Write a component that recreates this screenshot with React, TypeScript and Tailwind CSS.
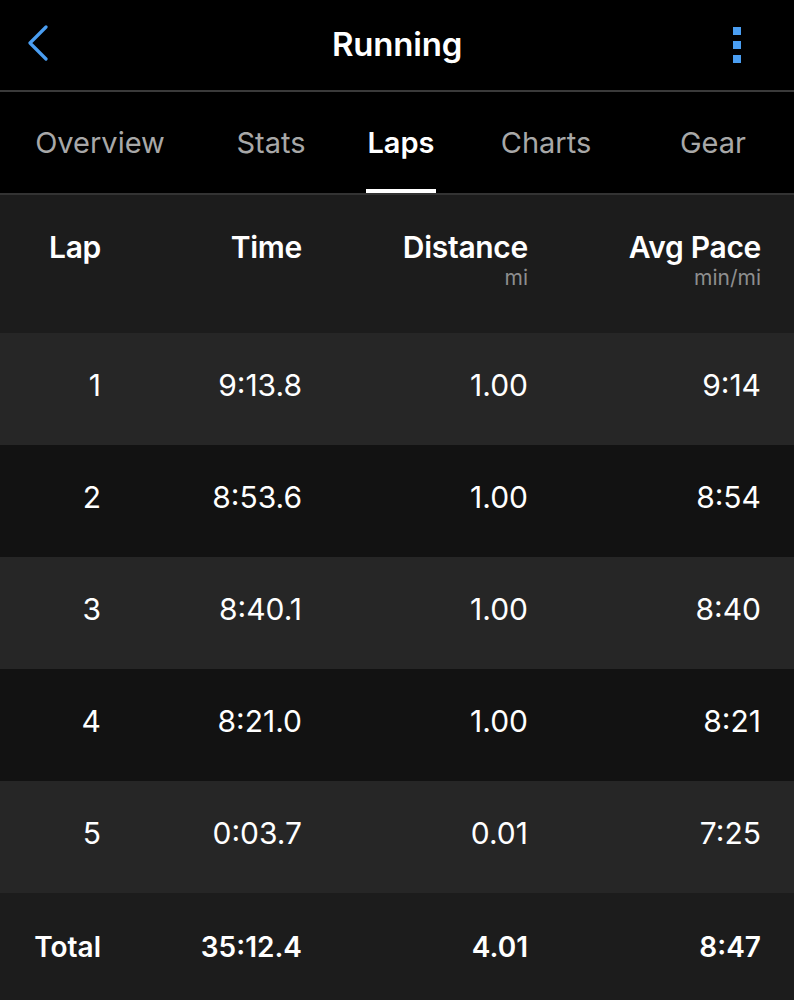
import { ReactNode } from 'react';

const tabs = ['Overview', 'Stats', 'Laps', 'Charts', 'Gear'];

const laps = [
  { lap: '1', time: '9:13.8', dist: '1.00', pace: '9:14' },
  { lap: '2', time: '8:53.6', dist: '1.00', pace: '8:54' },
  { lap: '3', time: '8:40.1', dist: '1.00', pace: '8:40' },
  { lap: '4', time: '8:21.0', dist: '1.00', pace: '8:21' },
  { lap: '5', time: '0:03.7', dist: '0.01', pace: '7:25' },
];

// fixed column right edges: 101, 302, 528, 761
function Row({ cells, className }: { cells: ReactNode[]; className: string }) {
  return (
    <div className={`grid grid-cols-[101px_201px_226px_233px] pr-[33px] text-right ${className}`}>
      {cells.map((c, i) => (
        <div key={i}>{c}</div>
      ))}
    </div>
  );
}

function HeadCell({ label, unit }: { label: string; unit?: string }) {
  return (
    <div className="flex flex-col items-end">
      <span className="text-[30px] font-semibold leading-[36px] tracking-[-0.3px] text-white">{label}</span>
      <span className="h-[26px] text-[21px] leading-[26px] text-[#8e8e8e]">{unit}</span>
    </div>
  );
}

export default function App() {
  return (
    <div className="w-[794px] h-[1000px] overflow-hidden bg-black font-['Inter',sans-serif] text-white">
      {/* Top bar */}
      <div className="relative flex h-[90px] items-center justify-center">
        <svg className="absolute left-[26px] top-[25px]" width="24" height="36" viewBox="0 0 24 36" fill="none">
          <path d="M20 2 L4 18 L20 34" stroke="#4a9ef2" strokeWidth="3.2" strokeLinecap="round" strokeLinejoin="round" />
        </svg>
        <span className="text-[33px] font-semibold tracking-[-0.2px]">Running</span>
        <div className="absolute right-[53px] top-[27px] flex flex-col gap-[6px]">
          <span className="block h-[8px] w-[8px] bg-[#4a9ef2]" />
          <span className="block h-[8px] w-[8px] bg-[#4a9ef2]" />
          <span className="block h-[8px] w-[8px] bg-[#4a9ef2]" />
        </div>
      </div>
      <div className="h-[2px] bg-[#3a3a3a]" />

      {/* Tabs */}
      <div className="grid h-[101px] grid-cols-[200px_142px_118px_172px_162px] text-[29px] leading-none">
        {tabs.map((t) => {
          const active = t === 'Laps';
          return (
            <div key={t} className="flex flex-col items-center">
              <div className={`flex flex-1 items-center pt-[4px] ${active ? 'font-semibold text-white' : 'text-[#a8a8a8]'}`}>
                {t}
              </div>
              <div className={`h-[4px] w-[70px] ${active ? 'bg-white' : 'bg-transparent'}`} />
            </div>
          );
        })}
      </div>
      <div className="h-[2px] bg-[#333333]" />

      {/* Table */}
      <Row
        className="h-[138px] items-start bg-[#1c1c1c] pt-[34px]"
        cells={[
          <HeadCell key="a" label="Lap" />,
          <HeadCell key="b" label="Time" />,
          <HeadCell key="c" label="Distance" unit="mi" />,
          <HeadCell key="d" label="Avg Pace" unit="min/mi" />,
        ]}
      />
      {laps.map((l, i) => (
        <Row
          key={l.lap}
          className={`h-[112px] items-center pb-[8px] text-[30px] ${i % 2 === 0 ? 'bg-[#262626]' : 'bg-[#121212]'}`}
          cells={[l.lap, l.time, l.dist, l.pace]}
        />
      ))}
      <Row
        className="h-[107px] items-center bg-[#1c1c1c] text-[28px] font-semibold"
        cells={['Total', '35:12.4', '4.01', '8:47']}
      />
    </div>
  );
}
